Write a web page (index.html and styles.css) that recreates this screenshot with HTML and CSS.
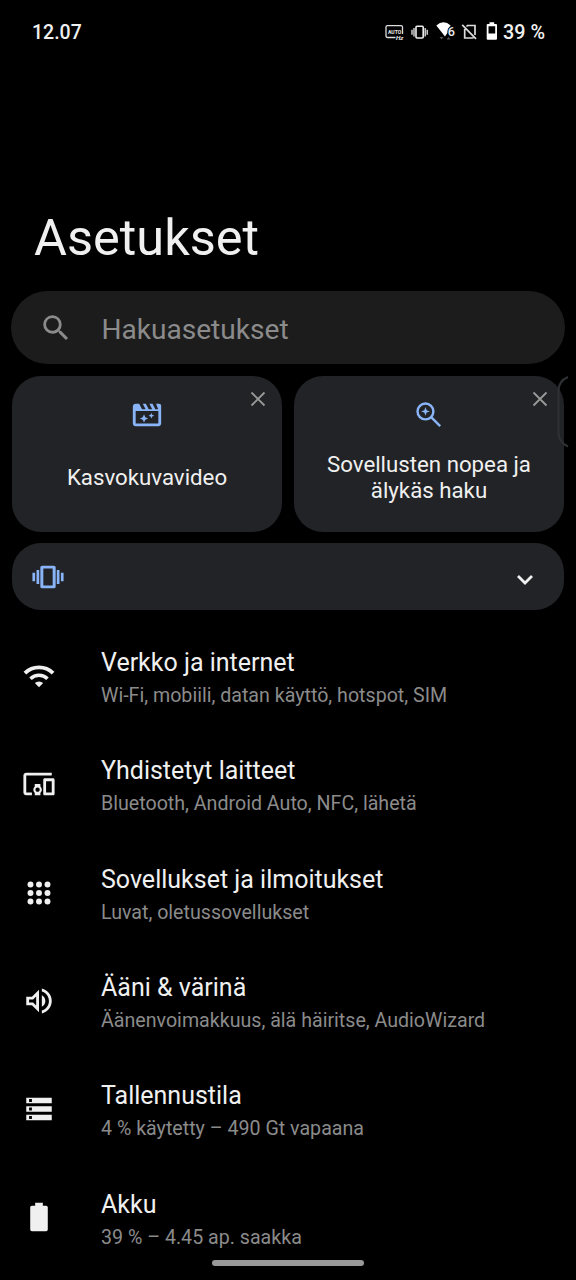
FILE: index.html
```html
<!DOCTYPE html>
<html lang="fi">
<head>
<meta charset="utf-8">
<title>Asetukset</title>
<link rel="stylesheet" href="styles.css">
</head>
<body>
<div class="screen">
  <header class="status">
    <span class="clock">12.07</span>
    <svg class="status-icons" viewBox="0 0 116 24" fill="none">
      <path d="M10.500 17.500H2.500a1.500 1.500 0 0 1-1.500-1.500V7.200a1.500 1.500 0 0 1 1.500-1.500H16a1.500 1.500 0 0 1 1.500 1.500V14" stroke="#ddd" stroke-width="1.300"/>
      <text class="auto" x="3" y="13.800" textLength="13.300" lengthAdjust="spacingAndGlyphs">AUTO</text>
      <text class="hz" x="11" y="20" textLength="7.500" lengthAdjust="spacingAndGlyphs">Hz</text>
      <rect x="31" y="6.300" width="7.200" height="11.700" rx="1" stroke="#eee" stroke-width="1.600"/>
      <path d="M29 8v8.500M40.200 8v8.500M27 9.800v5M42.200 9.800v5" stroke="#ccc" stroke-width="1.500"/>
      <path d="M51.300 5.500Q58.500-.8 65.700 5.500L64.500 7Q62.300 8.500 62.300 13L60 16.500Z" fill="#fff"/>
      <path d="M54.500 17h4l-2 2.500zM61.500 19.500h4l-2-2.500z" fill="#555"/>
      <text class="six" x="62.800" y="16" textLength="7.200" lengthAdjust="spacingAndGlyphs">6</text>
      <path d="M81.500 6.500L82.500 5.500h7.500V15M79.700 9v9H88.500M77.200 4.800l13.800 14" stroke="#ddd" stroke-width="1.700"/>
      <path d="M104.500 4V2.300h4.700V4h1.800a1 1 0 0 1 1 1v13.700a1 1 0 0 1-1 1h-8.300a1 1 0 0 1-1-1V5a1 1 0 0 1 1-1zM103.500 6.300v7.300h6.700V6.300z" fill="#fff" fill-rule="evenodd"/>
    </svg>
    <span class="percent">39 %</span>
  </header>

  <h1 class="title">Asetukset</h1>

  <div class="search">
    <svg class="icon" viewBox="0 0 24 24"><path d="M15.500 14h-.79l-.28-.27A6.470 6.470 0 0 0 16 9.500 6.500 6.500 0 1 0 9.500 16c1.610 0 3.090-.59 4.230-1.570l.27.28v.79l5 4.990L20.490 19l-4.990-5zm-6 0C7.010 14 5 11.990 5 9.500S7.010 5 9.500 5 14 7.010 14 9.500 11.990 14 9.500 14z"/></svg>
    <span>Hakuasetukset</span>
  </div>

  <div class="cards">
    <div class="card">
      <svg class="icon" viewBox="0 0 24 24"><path d="M4 9.200V18h16V9.200zM20.500 4H18.400l1.500 4h-2l-2-4h-2.200l2 4h-2.500l-2-4H9l2 4H8.500l-2-4H4C2.900 4 2 4.900 2 6v12c0 1.100.9 2 2 2h16c1.100 0 2-.9 2-2V5.500C22 4.600 21.400 4 20.500 4z" fill-rule="evenodd"/><path d="M9.900 11.500l.9 2 2 .9-2 .9-.9 2-.9-2-2-.9 2-.9zM15.100 10.500l.6 1.400 1.400.6-1.400.6-.6 1.400-.6-1.400-1.400-.6 1.400-.6z"/></svg>
      <svg class="close" viewBox="0 0 16 16"><path d="M1.500 1.500l13 13M14.500 1.500l-13 13"/></svg>
      <div class="card-label">Kasvokuvavideo</div>
    </div>
    <div class="card">
      <svg class="icon" viewBox="0 0 24 24"><circle cx="9.500" cy="9.500" r="5.600" class="ring"/><path class="ring" d="M13.500 13.500l6.400 6.400"/><path d="M9.500 6.400l.8 2.300 2.300.8-2.300.8-.8 2.300-.8-2.300-2.300-.8 2.300-.8z"/></svg>
      <svg class="close" viewBox="0 0 16 16"><path d="M1.500 1.500l13 13M14.500 1.500l-13 13"/></svg>
      <div class="card-label">Sovellusten nopea ja<br>älykäs haku</div>
    </div>
    <svg class="edge-handle" viewBox="0 0 12 72"><path d="M11 1Q1.500 5 1.500 15V57Q1.500 66 11 70.500"/></svg>
  </div>

  <div class="panel">
    <svg class="icon" viewBox="0 0 24 24"><path fill-rule="evenodd" d="M7.800 4h8.400a1.200 1.200 0 0 1 1.200 1.200v13.600a1.200 1.200 0 0 1-1.200 1.200H7.800a1.200 1.200 0 0 1-1.200-1.200V5.200A1.200 1.200 0 0 1 7.800 4zM8.700 6v12h6.600V6zM1 9h1.900v6H1zM3.900 7h1.900v10H3.900zM18.200 7h1.900v10h-1.900zM21.100 9H23v6h-1.900z"/></svg>
    <svg class="chevron" viewBox="0 0 18 12"><path d="M2 2l7 7 7-7"/></svg>
  </div>

  <main class="list">
    <div class="row">
      <svg class="icon wifi" viewBox="0 0 36 36"><path d="M3.900 15.200a20 20 0 0 1 28.200 0" stroke-width="3.800"/><path d="M9.500 20.800a12 12 0 0 1 17 0" stroke-width="3.500"/><path class="dot" d="M18 29.300l-4.200-4.200a6 6 0 0 1 8.400 0z"/></svg>
      <div class="text"><div class="name">Verkko ja internet</div><div class="sub">Wi-Fi, mobiili, datan käyttö, hotspot, SIM</div></div>
    </div>
    <div class="row">
      <svg class="icon" viewBox="0 0 24 24"><path d="M3 6h18V4H3c-1.100 0-2 .9-2 2v12c0 1.100.9 2 2 2h4v-2H3V6zm10 6H9v1.780c-.61.55-1 1.330-1 2.220s.39 1.670 1 2.220V20h4v-1.780c.61-.55 1-1.340 1-2.220s-.39-1.670-1-2.220V12zm-2 5.500c-.83 0-1.500-.67-1.500-1.500s.67-1.500 1.500-1.500 1.500.67 1.500 1.500-.67 1.500-1.500 1.500zM22 8h-6c-.5 0-1 .5-1 1v10c0 .5.5 1 1 1h6c.5 0 1-.5 1-1V9c0-.5-.5-1-1-1zm-1 10h-4v-8h4v8z"/></svg>
      <div class="text"><div class="name">Yhdistetyt laitteet</div><div class="sub">Bluetooth, Android Auto, NFC, lähetä</div></div>
    </div>
    <div class="row">
      <svg class="icon" viewBox="0 0 24 24"><circle cx="6" cy="6" r="2.100"/><circle cx="12" cy="6" r="2.100"/><circle cx="18" cy="6" r="2.100"/><circle cx="6" cy="12" r="2.100"/><circle cx="12" cy="12" r="2.100"/><circle cx="18" cy="12" r="2.100"/><circle cx="6" cy="18" r="2.100"/><circle cx="12" cy="18" r="2.100"/><circle cx="18" cy="18" r="2.100"/></svg>
      <div class="text"><div class="name">Sovellukset ja ilmoitukset</div><div class="sub">Luvat, oletussovellukset</div></div>
    </div>
    <div class="row">
      <svg class="icon" viewBox="0 0 24 24"><path d="M3 9v6h4l5 5V4L7 9H3zm7-.17v6.340L7.830 13H5v-2h2.830L10 8.830zM16.500 12c0-1.770-1.020-3.290-2.500-4.030v8.050c1.480-.73 2.500-2.250 2.500-4.020zM14 3.230v2.060c2.890.86 5 3.540 5 6.710s-2.110 5.850-5 6.710v2.060c4.010-.91 7-4.490 7-8.770s-2.990-7.860-7-8.770z"/></svg>
      <div class="text"><div class="name">Ääni &amp; värinä</div><div class="sub">Äänenvoimakkuus, älä häiritse, AudioWizard</div></div>
    </div>
    <div class="row">
      <svg class="icon" viewBox="0 0 24 24"><path fill-rule="evenodd" d="M3 4h18v4H3zM5 5v2h2V5zM3 10h18v4H3zM5 11v2h2v-2zM3 16h18v4H3zM5 17v2h2v-2z"/></svg>
      <div class="text"><div class="name">Tallennustila</div><div class="sub">4 % käytetty – 490 Gt vapaana</div></div>
    </div>
    <div class="row">
      <svg class="icon" viewBox="0 0 24 24"><path d="M17 4h-2.300V2H9.300v2H7a1.200 1.200 0 0 0-1.200 1.200v15.600A1.200 1.200 0 0 0 7 22h10a1.200 1.200 0 0 0 1.200-1.200V5.200A1.200 1.200 0 0 0 17 4z"/></svg>
      <div class="text"><div class="name">Akku</div><div class="sub">39 % – 4.45 ap. saakka</div></div>
    </div>
  </main>
  <div class="home-bar"></div>
</div>
</body>
</html>
```
FILE: styles.css
```css
* { box-sizing: border-box; }
body {
  margin: 0;
  background: #000;
  color: #f0f0f0;
  font-family: Roboto, "Noto Sans", sans-serif;
}
.screen {
  position: relative;
  width: 576px;
  height: 1280px;
  overflow: hidden;
}
.icon { width: 34px; height: 34px; flex: none; fill: currentColor; }

.status {
  display: flex;
  align-items: center;
  height: 64px;
  padding: 0 31px 0 32px;
  font-size: 19.500px;
  font-weight: 500;
}
.status-icons { width: 116px; height: 24px; margin: 0 2px 0 auto; }
.percent { font-size: 19.800px; }
.status-icons text { fill: #eee; font-weight: 700; }
.auto { font-size: 6px; }
.hz { font-size: 5.500px; font-style: italic; }
.status-icons .six { font-size: 13.500px; font-weight: 500; }

.title {
  margin: 144px 0 0 34px;
  font-size: 50.500px;
  line-height: 60px;
  font-weight: 400;
}

.search {
  display: flex;
  align-items: center;
  gap: 28px;
  height: 73px;
  margin: 23.400px 11.400px 0;
  padding-left: 28px;
  border-radius: 37px;
  background: #1c1c1c;
  color: #8b8b8b;
  font-size: 28.100px;
}
.search span { padding-top: 3px; }

.cards {
  position: relative;
  display: grid;
  grid-template-columns: 1fr 1fr;
  gap: 12px;
  margin: 11.600px 12px 0;
}
.card {
  position: relative;
  display: flex;
  flex-direction: column;
  align-items: center;
  height: 156px;
  padding-top: 22px;
  border-radius: 29px;
  background: #222326;
}
.card .icon, .panel .icon { color: #8ab4f8; }
.ring { fill: none; stroke: #8ab4f8; stroke-width: 1.700; }
.card-label {
  display: flex;
  align-items: center;
  height: 52px;
  margin-top: 19.300px;
  font-size: 22.250px;
  line-height: 26px;
  text-align: center;
}
.close {
  position: absolute;
  top: 15.500px;
  right: 16px;
  width: 16px;
  height: 16px;
  fill: none;
  stroke: #999;
  stroke-width: 1.800;
}
.edge-handle {
  position: absolute;
  top: 0;
  right: -5px;
  width: 12px;
  height: 72px;
  fill: none;
  stroke: #303134;
  stroke-width: 2;
}

.panel {
  display: flex;
  align-items: center;
  justify-content: space-between;
  height: 67px;
  margin: 11.500px 12px 0;
  padding: 0 30px 0 19px;
  border-radius: 29px;
  background: #222326;
}
.chevron {
  width: 18px;
  height: 12px;
  margin-top: 6px;
  fill: none;
  stroke: #f0f0f0;
  stroke-width: 2.800;
}

.list { padding-top: 11.300px; }
.row {
  display: flex;
  align-items: center;
  gap: 45px;
  height: 108.300px;
  padding-left: 22px;
}
.wifi { width: 36px; height: 36px; margin: 0 -1px; fill: none; stroke: #f0f0f0; }
.wifi .dot { fill: #f0f0f0; stroke: none; }
.text { align-self: flex-start; padding-top: 24.400px; white-space: nowrap; }
.name { font-size: 25px; line-height: 34px; }
.sub { font-size: 19.640px; line-height: 32px; color: #8b8b8b; }

.home-bar {
  position: absolute;
  left: 212px;
  top: 1260px;
  width: 152px;
  height: 6px;
  border-radius: 3px;
  background: #999;
}
```
